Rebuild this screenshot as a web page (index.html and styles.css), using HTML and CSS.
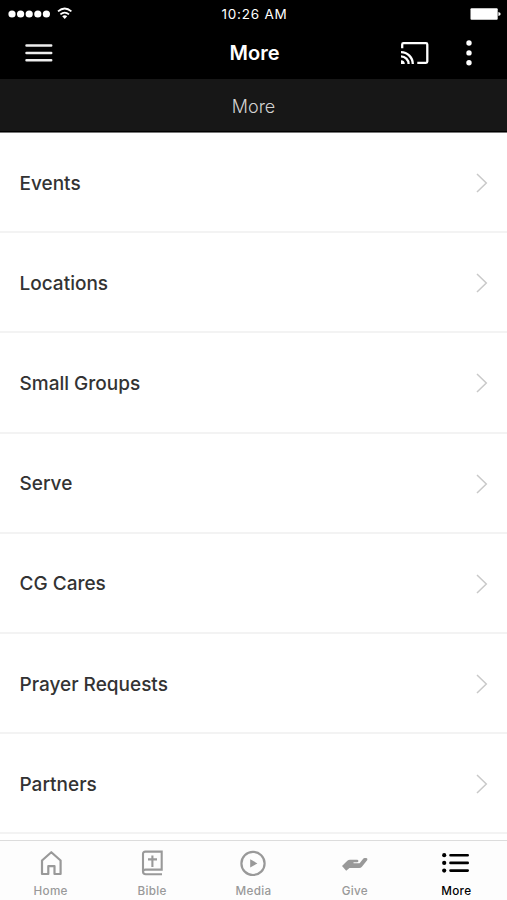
FILE: index.html
```html
<!DOCTYPE html>
<html lang="en">
<head>
<meta charset="utf-8">
<meta name="viewport" content="width=device-width">
<title>More</title>
<link rel="stylesheet" href="styles.css">
</head>
<body>
<header>
  <div class="status">
    <svg class="signal" width="66" height="16" fill="#fff"><circle cx="4" cy="8" r="3.6"/><circle cx="12.6" cy="8" r="3.6"/><circle cx="21.2" cy="8" r="3.6"/><circle cx="29.8" cy="8" r="3.6"/><circle cx="38.4" cy="8" r="3.6"/><g fill="none" stroke="#fff" stroke-width="1.8"><path d="M50 5.4Q56.7-.4 63.4 5.4"/><path d="M52.4 8.4Q56.7 4.8 61 8.4"/></g><path d="M54.2 10.2Q56.7 8.2 59.2 10.2L56.7 13Z"/></svg>
    <time>10:26 AM</time>
    <svg class="battery" width="31" height="14" fill="#fff"><rect x=".5" y="1.2" width="27.2" height="11.6" rx="1"/><path d="M28.4 5Q30.7 5.4 30.7 7Q30.7 8.6 28.4 9Z"/></svg>
  </div>
  <div class="nav">
    <svg class="menu" width="28" height="20" stroke="#eee" stroke-width="2.5" stroke-linecap="round"><path d="M1.5 2.5h24.7M1.5 10h24.7M1.5 17.3h24.7"/></svg>
    <h1>More</h1>
    <svg class="cast" width="30" height="24" fill="none" stroke="#fff" stroke-width="2.3"><path d="M2.2 7.2V3.5Q2.2 2.2 3.5 2.2H26Q27.3 2.2 27.3 3.5V20.5Q27.3 21.8 26 21.8H17.3"/><path d="M1 11.2A11.8 11.8 0 0 1 12.8 23M1 15.4A7.6 7.6 0 0 1 8.6 23"/><path d="M1 19.2A3.8 3.8 0 0 1 4.8 23H1Z" fill="#fff" stroke="none"/></svg>
    <svg class="dots" width="6" height="26" fill="#fff"><circle cx="3" cy="3" r="2.7"/><circle cx="3" cy="12.9" r="2.7"/><circle cx="3" cy="22.8" r="2.7"/></svg>
  </div>
</header>
<h2>More</h2>
<main>
  <a class="row"><span>Events</span><svg width="12" height="20"><path d="M1 1l9.3 9L1 19"/></svg></a>
  <a class="row"><span>Locations</span><svg width="12" height="20"><path d="M1 1l9.3 9L1 19"/></svg></a>
  <a class="row"><span>Small Groups</span><svg width="12" height="20"><path d="M1 1l9.3 9L1 19"/></svg></a>
  <a class="row"><span>Serve</span><svg width="12" height="20"><path d="M1 1l9.3 9L1 19"/></svg></a>
  <a class="row"><span>CG Cares</span><svg width="12" height="20"><path d="M1 1l9.3 9L1 19"/></svg></a>
  <a class="row"><span>Prayer Requests</span><svg width="12" height="20"><path d="M1 1l9.3 9L1 19"/></svg></a>
  <a class="row"><span>Partners</span><svg width="12" height="20"><path d="M1 1l9.3 9L1 19"/></svg></a>
</main>
<nav class="tabs">
  <a class="tab"><svg width="28" height="28" fill="none" stroke="#999" stroke-width="2.2" stroke-linejoin="round"><path d="M5 11.5L14.3 3.2L23.6 11.5V25H17.5V17.2H11.3V25H5Z"/></svg><span>Home</span></a>
  <a class="tab"><svg width="28" height="28" fill="none" stroke="#999" stroke-width="2.1"><path d="M24 25.3H7.7Q5 25.3 5 22.6V5Q5 2.6 7.4 2.6H23.7V20.6H7.6Q5 20.6 5 23M14.4 6.4V18M10 10.4H19"/></svg><span>Bible</span></a>
  <a class="tab"><svg width="28" height="28" fill="none" stroke="#999" stroke-width="2.2"><circle cx="14" cy="14.4" r="11.6"/><path d="M11.2 10.3L18.4 14.4L11.2 18.5Z" fill="#999" stroke="none"/></svg><span>Media</span></a>
  <a class="tab"><svg width="28" height="28" fill="#999"><path d="M1 17L6.3 11.7Q7.4 10.7 9 10.7H16Q17.4 10.7 17.4 12Q17.4 13.3 16 13.3H12.5V14.3H18.6L22 9.9Q22.6 9.1 23.7 9.1H25.4Q26.9 9.4 26.3 11L20.9 17.8Q19.9 19 18.2 19H8.5L5.2 21.8Z"/></svg><span>Give</span></a>
  <a class="tab active"><svg width="28" height="28" fill="#000" stroke="#000" stroke-width="2.6" stroke-linecap="round"><path d="M8.5 6.2h17.2M8.5 13.9h17.2M8.5 21.6h17.2"/><g stroke="none"><circle cx="2.2" cy="6.2" r="2.1"/><circle cx="2.2" cy="13.9" r="2.1"/><circle cx="2.2" cy="21.6" r="2.1"/></g></svg><span>More</span></a>
</nav>
</body>
</html>
```
FILE: styles.css
```css
* { box-sizing: border-box; }
body {
  margin: 0;
  height: 900px;
  display: flex;
  flex-direction: column;
  overflow: hidden;
  background: #fff;
  font-family: Inter, "Liberation Sans", sans-serif;
}
svg { display: block; flex: none; }
h1, h2 { margin: 0; }
header { height: 79px; background: #000; color: #fff; }
.status, .nav {
  display: grid;
  align-items: center;
}
.status {
  height: 26px;
  grid-template-columns: 1fr auto 1fr;
  padding: 1px 6px 0 8px;
}
.status time { font-size: 13.5px; letter-spacing: .8px; line-height: 26px; }
.battery { justify-self: end; }
.nav {
  height: 53px;
  grid-template-columns: 100px 259px 1fr auto;
  padding: 0 35.5px 0 25px;
}
h1 { font-size: 20px; line-height: 52px; font-weight: 600; text-align: center; }
.cast { justify-self: start; margin-left: 16px; }
h2 {
  height: 54px;
  background: #171717;
  color: #d2d2d2;
  font-size: 18px;
  font-weight: 300;
  line-height: 55px;
  text-align: center;
  border-bottom: 1px solid #777;
  box-shadow: inset 0 -1px #000;
}
main { height: 707px; overflow: hidden; }
.row {
  height: 100.2px;
  display: flex;
  align-items: center;
  justify-content: space-between;
  padding: 2px 19px 0 19.5px;
  border-bottom: 2px solid #f3f3f3;
  color: #333;
  font-size: 19px;
  font-weight: 500;
}
.row svg { fill: none; stroke: #c9c9c9; stroke-width: 1.5; }
.tabs {
  height: 60px;
  display: grid;
  grid-template-columns: repeat(5, 1fr);
  border-top: 1px solid #dcdcdc;
  background: #fdfdfd;
}
.tab {
  display: flex;
  flex-direction: column;
  align-items: center;
  padding-top: 8px;
  color: #999;
  font-size: 11.7px;
  line-height: 16px;
  font-weight: 500;
  letter-spacing: .3px;
}
.tab span { margin-top: 6px; }
.active { color: #000; }
```
